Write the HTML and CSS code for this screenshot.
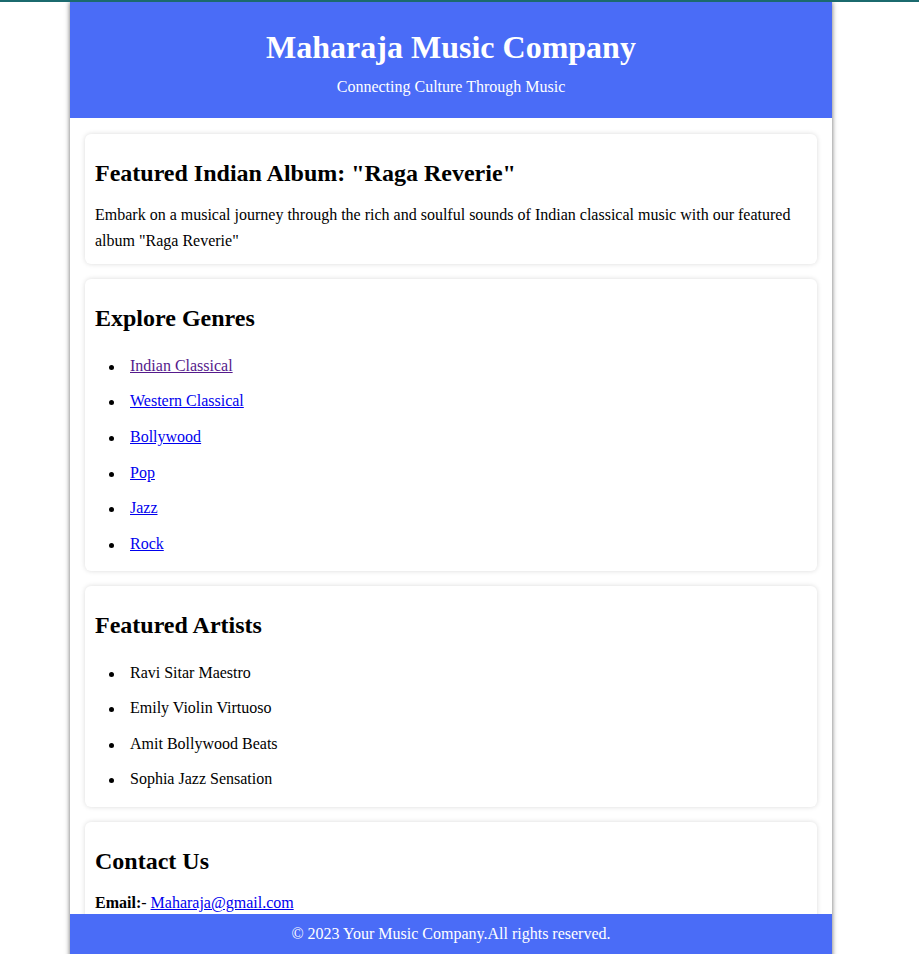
FILE: index.html
```html
<!DOCTYPE html>
<html lang="en">
<head>
<meta charset="UTF-8">
<title>Maharaja Music Company</title>
<link rel="stylesheet" href="styles.css">
</head>
<body>
<div class="container">
  <header class="site-header">
    <h1 class="site-title">Maharaja Music Company</h1>
    <p class="site-tagline">Connecting Culture Through Music</p>
  </header>
  <main class="content">
    <section class="card">
      <h2 class="card-title">Featured Indian Album: "Raga Reverie"</h2>
      <p class="card-text">Embark on a musical journey through the rich and soulful sounds of Indian classical music with our featured album "Raga Reverie"</p>
    </section>
    <section class="card">
      <h2 class="card-title">Explore Genres</h2>
      <ul class="card-list">
        <li><a class="visited" href="#indian">Indian Classical</a></li>
        <li><a href="#western">Western Classical</a></li>
        <li><a href="#bollywood">Bollywood</a></li>
        <li><a href="#pop">Pop</a></li>
        <li><a href="#jazz">Jazz</a></li>
        <li><a href="#rock">Rock</a></li>
      </ul>
    </section>
    <section class="card">
      <h2 class="card-title">Featured Artists</h2>
      <ul class="card-list">
        <li>Ravi Sitar Maestro</li>
        <li>Emily Violin Virtuoso</li>
        <li>Amit Bollywood Beats</li>
        <li>Sophia Jazz Sensation</li>
      </ul>
    </section>
    <section class="card">
      <h2 class="card-title">Contact Us</h2>
      <p class="card-text"><strong>Email:</strong>- <a href="mailto:Maharaja@gmail.com">Maharaja@gmail.com</a></p>
      <p class="card-text"><strong>Phone:</strong>- +91 98765 43210</p>
    </section>
  </main>
  <footer class="site-footer">© 2023 Your Music Company.All rights reserved.</footer>
</div>
</body>
</html>
```
FILE: styles.css
```css
html {
  background: #ffffff;
}

body {
  margin: 0;
  padding-right: 17px;
  border-top: 2px solid #1b6a6e;
  font-family: "Liberation Serif", "Times New Roman", serif;
  font-size: 16px;
  line-height: 1.6;
  color: #000000;
  background: #ffffff;
}

.container {
  width: 762px;
  margin: 0 auto;
  min-height: 100vh;
  background: #ffffff;
  box-shadow: 0 0 5px rgba(0, 0, 0, 0.6);
}

.site-header {
  background: #4a6cf7;
  color: #ffffff;
  text-align: center;
  padding: 20px 0 18px;
}

.site-title {
  margin: 0 0 1px;
  font-size: 32px;
  font-weight: bold;
  line-height: 1.6;
}

.site-tagline {
  margin: 0;
  font-size: 16px;
}

.content {
  padding: 16px 15px 60px;
  display: flex;
  flex-direction: column;
  gap: 15px;
}

.card {
  display: flow-root;
  padding: 0 10px;
  background: #ffffff;
  border-radius: 6px;
  box-shadow: 0 0 5px rgba(0, 0, 0, 0.15);
}

.card-title {
  margin: 20px 0 10px;
  font-size: 24px;
  font-weight: bold;
}

.card-text {
  margin: 10px 0 11px;
}

.card-list {
  margin: 15px 0;
  padding-left: 35px;
  list-style: none;
}

.card-list li {
  margin-bottom: 10px;
}

.card-list li::before {
  content: "";
  display: inline-block;
  width: 5px;
  height: 5px;
  border-radius: 50%;
  background: #000000;
  margin-left: -21.5px;
  margin-right: 16.5px;
  vertical-align: 1px;
}

a {
  color: #0000ee;
}

a.visited {
  color: #551a8b;
}

.site-footer {
  position: fixed;
  bottom: 0;
  width: 762px;
  height: 40px;
  display: flex;
  align-items: center;
  justify-content: center;
  background: #4a6cf7;
  color: #ffffff;
}
```
